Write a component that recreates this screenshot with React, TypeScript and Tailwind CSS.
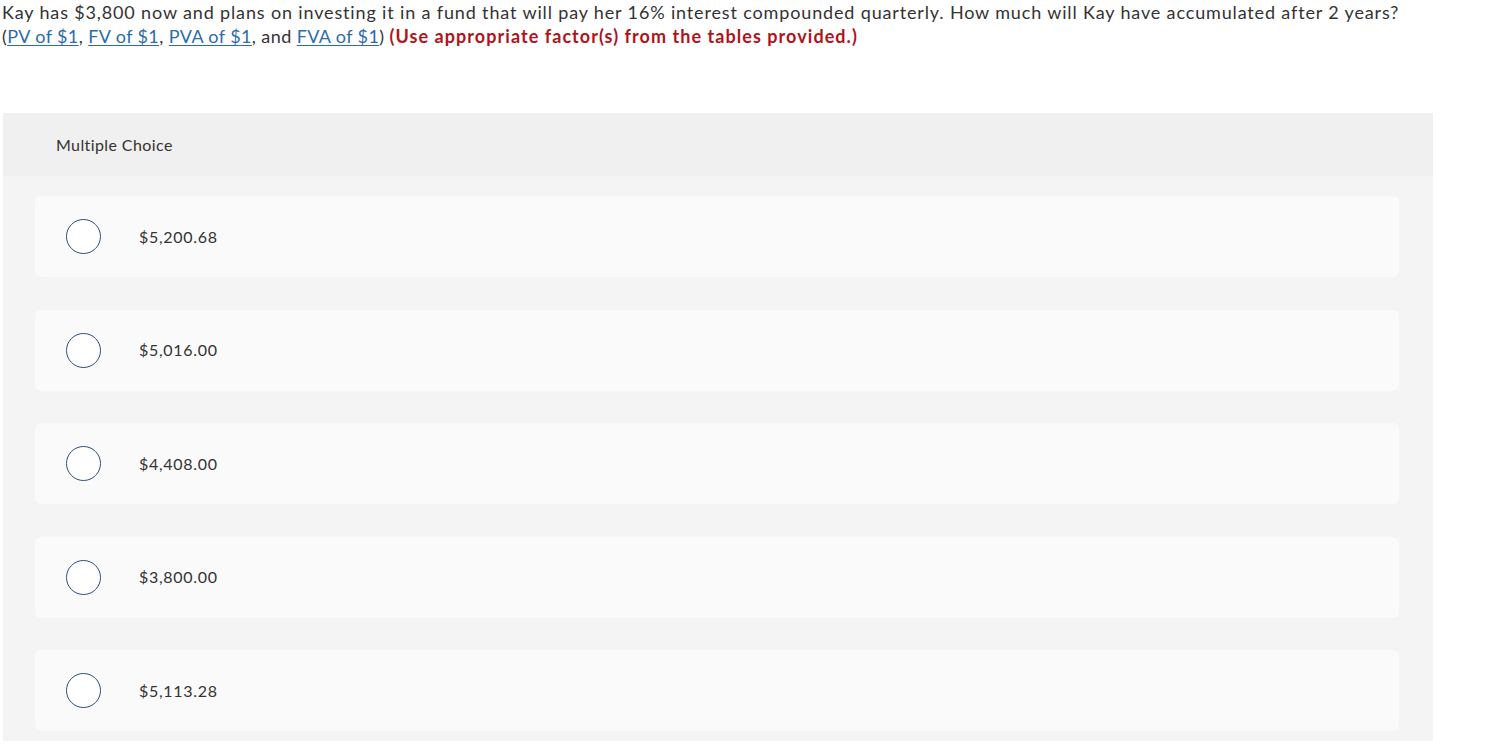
import React from "react";

const options = ["$5,200.68", "$5,016.00", "$4,408.00", "$3,800.00", "$5,113.28"];

const tables = ["PV of $1", "FV of $1", "PVA of $1", "FVA of $1"];

function TableLink({ label }: { label: string }) {
  return (
    <a href="#" className="text-[#2d6bab] underline underline-offset-2 decoration-1">
      {label}
    </a>
  );
}

function ChoiceRow({ label }: { label: string }) {
  return (
    <div className="flex h-[81px] items-center rounded-md bg-[#fafafa] pl-[31px]">
      <span className="h-[35px] w-[35px] shrink-0 rounded-full border border-[#2c4f7c] bg-white" />
      <span className="ml-[38px] text-[16px] tracking-[0.7px] text-[#333]">{label}</span>
    </div>
  );
}

export default function App() {
  return (
    <div className="min-h-[756px] bg-white font-['Lato',sans-serif] text-[#333]">
      {/* Question */}
      <div className="pl-[2px] text-[18px] leading-[24px] tracking-[0.85px]">
        <p>
          Kay has $3,800 now and plans on investing it in a fund that will pay her 16% interest compounded
          quarterly. How much will Kay have accumulated after 2 years?
        </p>
        <p className="tracking-[0.4px]">
          (
          {tables.map((t, i) => (
            <React.Fragment key={t}>
              <TableLink label={t} />
              {i < 2 ? ", " : i === 2 ? ", and " : ""}
            </React.Fragment>
          ))}
          ){" "}
          <span className="font-bold tracking-[1.05px] text-[#b0141b]">
            (Use appropriate factor(s) from the tables provided.)
          </span>
        </p>
      </div>

      {/* Multiple choice panel */}
      <div className="mt-[65px] ml-[3px] w-[1430px] bg-[#f4f4f4] pb-[10px]">
        <div className="flex h-[63px] items-center bg-[#f0f0f0] pl-[53px] text-[16px] tracking-[0.4px]">
          Multiple Choice
        </div>
        <div className="flex flex-col gap-[32.5px] pl-[32px] pr-[34px] pt-[20px]">
          {options.map((o) => (
            <ChoiceRow key={o} label={o} />
          ))}
        </div>
      </div>
    </div>
  );
}
